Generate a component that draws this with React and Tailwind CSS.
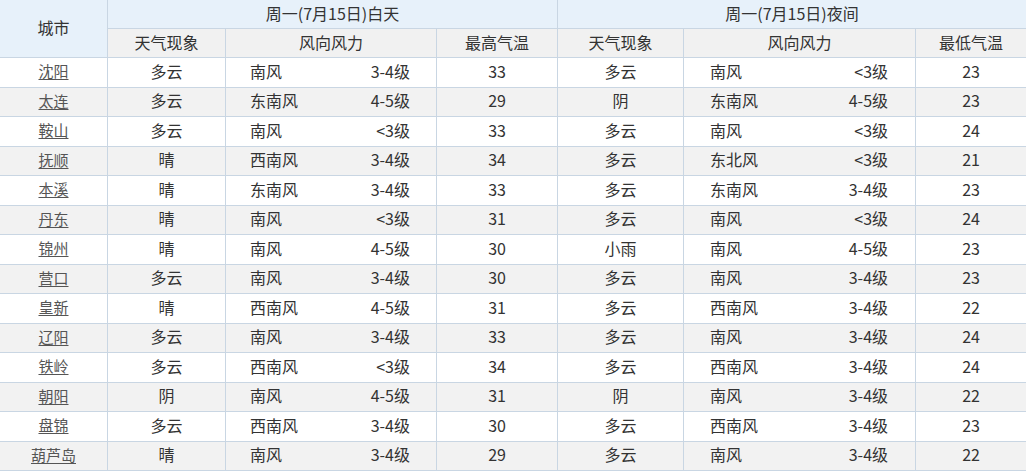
import React from 'react';

const day = [
  ['沈阳', '多云', '南风', '3-4级', '33', '多云', '南风', '<3级', '23'],
  ['太连', '多云', '东南风', '4-5级', '29', '阴', '东南风', '4-5级', '23'],
  ['鞍山', '多云', '南风', '<3级', '33', '多云', '南风', '<3级', '24'],
  ['抚顺', '晴', '西南风', '3-4级', '34', '多云', '东北风', '<3级', '21'],
  ['本溪', '晴', '东南风', '3-4级', '33', '多云', '东南风', '3-4级', '23'],
  ['丹东', '晴', '南风', '<3级', '31', '多云', '南风', '<3级', '24'],
  ['锦州', '晴', '南风', '4-5级', '30', '小雨', '南风', '4-5级', '23'],
  ['营口', '多云', '南风', '3-4级', '30', '多云', '南风', '3-4级', '23'],
  ['皇新', '晴', '西南风', '4-5级', '31', '多云', '西南风', '3-4级', '22'],
  ['辽阳', '多云', '南风', '3-4级', '33', '多云', '南风', '3-4级', '24'],
  ['铁岭', '多云', '西南风', '<3级', '34', '多云', '西南风', '3-4级', '24'],
  ['朝阳', '阴', '南风', '4-5级', '31', '阴', '南风', '3-4级', '22'],
  ['盘锦', '多云', '西南风', '3-4级', '30', '多云', '西南风', '3-4级', '23'],
  ['葫芦岛', '晴', '南风', '3-4级', '29', '多云', '南风', '3-4级', '22'],
];

const cell = 'border border-[#c9d6e3] text-center align-middle px-0 pt-0 pb-[3px] leading-[20px]';

const App = () => {
  return (
    <div
      className="w-[1026px] h-[471px] overflow-hidden bg-white text-[#333] text-[16px]"
      style={{ fontFamily: '"Noto Sans CJK SC", "Noto Sans", sans-serif' }}
    >
      <table className="border-collapse table-fixed w-[1027px] -ml-px -mt-px">
        <colgroup>
          <col className="w-[108px]" />
          <col className="w-[118px]" />
          <col className="w-[211px]" />
          <col className="w-[121px]" />
          <col className="w-[126px]" />
          <col className="w-[232px]" />
          <col className="w-[111px]" />
        </colgroup>
        <thead>
          <tr className="h-[29px] bg-[#e7f1fa]">
            <th rowSpan={2} className={`${cell} font-normal`}>城市</th>
            <th colSpan={3} className={`${cell} font-normal`}>周一(7月15日)白天</th>
            <th colSpan={3} className={`${cell} font-normal`}>周一(7月15日)夜间</th>
          </tr>
          <tr className="h-[29px] bg-[#f1f1f1]">
            <th className={`${cell} font-normal`}>天气现象</th>
            <th className={`${cell} font-normal`}>风向风力</th>
            <th className={`${cell} font-normal`}>最高气温</th>
            <th className={`${cell} font-normal`}>天气现象</th>
            <th className={`${cell} font-normal`}>风向风力</th>
            <th className={`${cell} font-normal`}>最低气温</th>
          </tr>
        </thead>
        <tbody>
          {day.map((r, i) => (
            <tr key={r[0]} className={`h-[29.5px] ${i % 2 ? 'bg-[#f2f2f2]' : 'bg-white'}`}>
              <td className={cell}>
                <span className="text-[15px] underline underline-offset-2 text-[#555]">{r[0]}</span>
              </td>
              <td className={cell}>{r[1]}</td>
              <td className={cell}>
                <div className="flex justify-between pl-[24px] pr-[26px]">
                  <span>{r[2]}</span>
                  <span>{r[3]}</span>
                </div>
              </td>
              <td className={cell}>{r[4]}</td>
              <td className={cell}>{r[5]}</td>
              <td className={cell}>
                <div className="flex justify-between pl-[26px] pr-[27px]">
                  <span>{r[6]}</span>
                  <span>{r[7]}</span>
                </div>
              </td>
              <td className={cell}>{r[8]}</td>
            </tr>
          ))}
        </tbody>
      </table>
    </div>
  );
};

export default App;
